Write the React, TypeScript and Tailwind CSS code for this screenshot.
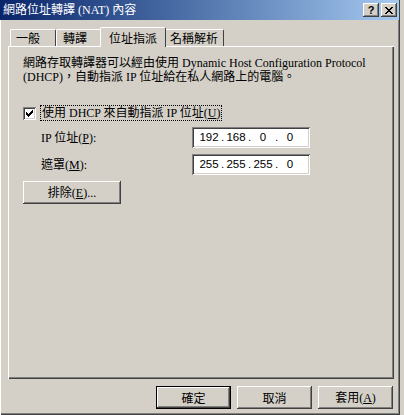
import React from "react";

const cjk = "font-['Noto_Sans_CJK_TC',sans-serif]";
const mixed = "font-['Liberation_Serif','Noto_Sans_CJK_TC',serif]";
const raised =
  "shadow-[inset_-1px_-1px_#404040,inset_1px_1px_#ffffff,inset_-2px_-2px_#808080,inset_2px_2px_#d4d0c8]";
const sunken =
  "shadow-[inset_1px_1px_#808080,inset_-1px_-1px_#ffffff,inset_2px_2px_#404040,inset_-2px_-2px_#d4d0c8]";

function Key({ k }: { k: string }) {
  return (
    <>
      (<span className="underline underline-offset-1">{k}</span>)
    </>
  );
}

function Tab({ label, w, pl, active }: { label: string; w: string; pl: string; active?: boolean }) {
  if (active) {
    return (
      <div
        className={`relative z-10 -mx-[2px] -mb-px flex h-[20px] ${w} items-center justify-center rounded-t-[2px] border-l border-t border-r border-l-white border-t-white border-r-[#404040] bg-[#d4d0c8] pt-px text-[12px] text-black ${cjk}`}
      >
        {label}
      </div>
    );
  }
  return (
    <div
      className={`flex h-[17px] ${w} ${pl} items-center rounded-t-[2px] border-l border-t border-r border-l-white border-t-white border-r-[#404040] text-[12px] text-black ${cjk}`}
    >
      {label}
    </div>
  );
}

function IpField({ parts }: { parts: string[] }) {
  return (
    <div
      className={`flex h-[21px] w-[118px] items-center bg-white pl-[7px] text-[11.5px] text-black ${sunken} font-['Liberation_Sans',sans-serif]`}
    >
      {parts.map((p, i) => (
        <React.Fragment key={i}>
          <span className="w-[20px] text-center">{p}</span>
          {i < 3 && <span className="w-[7px] text-center">.</span>}
        </React.Fragment>
      ))}
    </div>
  );
}

function Button({ children, w, primary }: { children: React.ReactNode; w: string; primary?: boolean }) {
  return (
    <div
      className={`flex h-[23px] ${w} items-center justify-center bg-[#d4d0c8] text-[12px] text-black ${cjk} ${
        primary
          ? "shadow-[inset_0_0_0_1px_#000000,inset_-2px_-2px_#404040,inset_2px_2px_#ffffff,inset_-3px_-3px_#808080]"
          : raised
      }`}
    >
      {children}
    </div>
  );
}

export default function App() {
  return (
    <div className="flex h-[415px] w-[404px] bg-[#d4d0c8]">
      <div className="flex h-[415px] w-[400px] flex-col border-r border-r-[#404040] bg-[#d4d0c8]">
        {/* title bar */}
        <div className="flex h-[20px] items-center justify-between bg-linear-to-r from-[#0a246a] to-[#a6caf0] pl-[3px] pr-[2px]">
          <span className={`text-[12px] text-white ${mixed}`}>網路位址轉譯 (NAT) 內容</span>
          <div className="flex gap-[2px]">
            <div
              className={`flex h-[14px] w-[16px] items-center justify-center bg-[#d4d0c8] text-[11px] font-bold leading-none text-black ${raised} font-['Liberation_Sans',sans-serif]`}
            >
              ?
            </div>
            <div className={`flex h-[14px] w-[16px] items-center justify-center bg-[#d4d0c8] ${raised}`}>
              <svg width="8" height="7" viewBox="0 0 8 7" shapeRendering="crispEdges">
                <path d="M0 0h2v1h-2zM6 0h2v1h-2zM1 1h2v1h-2zM5 1h2v1h-2zM2 2h4v1h-4zM3 3h2v1h-2zM2 4h4v1h-4zM1 5h2v1h-2zM5 5h2v1h-2zM0 6h2v1h-2zM6 6h2v1h-2z" fill="#000" />
              </svg>
            </div>
          </div>
        </div>

        <div className="flex flex-1 flex-col border-l border-l-white pb-[6px] pl-[7px] pr-[5px] pt-[6px] shadow-[inset_0_-1px_#404040,inset_0_-2px_#808080,inset_-1px_0_#808080]">
          {/* tabs */}
          <div className="flex h-[20px] items-end pl-[2px]">
            <Tab label="一般" w="w-[46px]" pl="pl-[5px]" />
            <Tab label="轉譯" w="w-[46px]" pl="pl-[6px]" />
            <Tab label="位址指派" w="w-[66px]" pl="" active />
            <Tab label="名稱解析" w="w-[60px]" pl="pl-[5px]" />
          </div>

          {/* panel */}
          <div className="flex h-[333px] w-[386px] flex-col border-l border-t border-l-white border-t-white bg-[#d4d0c8] pl-[14px] pt-[9px] shadow-[inset_-1px_-1px_#404040,inset_-2px_-2px_#808080]">
            <p className={`w-[350px] text-[12px] leading-[14px] text-black ${mixed}`}>
              網路存取轉譯器可以經由使用 Dynamic Host Configuration Protocol (DHCP)，自動指派 IP 位址給在私人網路上的電腦。
            </p>

            <div className="mt-[21px] flex items-center gap-[4px]">
              <div className={`flex h-[13px] w-[13px] items-center justify-center bg-white ${sunken}`}>
                <svg width="7" height="7" viewBox="0 0 7 7" shapeRendering="crispEdges">
                  <path d="M0 2h1v3h-1zM1 3h1v3h-1zM2 4h1v3h-1zM3 3h1v3h-1zM4 2h1v3h-1zM5 1h1v3h-1zM6 0h1v3h-1z" fill="#000" />
                </svg>
              </div>
              <span className={`border border-dotted border-black px-px text-[12px] leading-[14px] text-black ${mixed}`}>
                使用 DHCP 來自動指派 IP 位址<Key k="U" />
              </span>
            </div>

            <div className="mt-[6px] flex flex-col gap-[6px] pl-[18px] pr-[84px]">
              <div className="flex items-center justify-between">
                <span className={`text-[12px] text-black ${mixed}`}>
                  IP 位址<Key k="P" />:
                </span>
                <IpField parts={["192", "168", "0", "0"]} />
              </div>
              <div className="flex items-center justify-between">
                <span className={`text-[12px] text-black ${mixed}`}>
                  遮罩<Key k="M" />:
                </span>
                <IpField parts={["255", "255", "255", "0"]} />
              </div>
            </div>

            <div className="mt-[6px]">
              <Button w="w-[98px]">
                <span className={mixed}>
                  排除<Key k="E" />...
                </span>
              </Button>
            </div>
          </div>

          {/* bottom buttons */}
          <div className="mt-[7px] flex justify-end gap-[6px] pr-[1px]">
            <Button w="w-[75px]" primary>
              確定
            </Button>
            <Button w="w-[75px]">取消</Button>
            <Button w="w-[75px]">
              <span className={mixed}>
                套用<Key k="A" />
              </span>
            </Button>
          </div>
        </div>
      </div>
    </div>
  );
}
